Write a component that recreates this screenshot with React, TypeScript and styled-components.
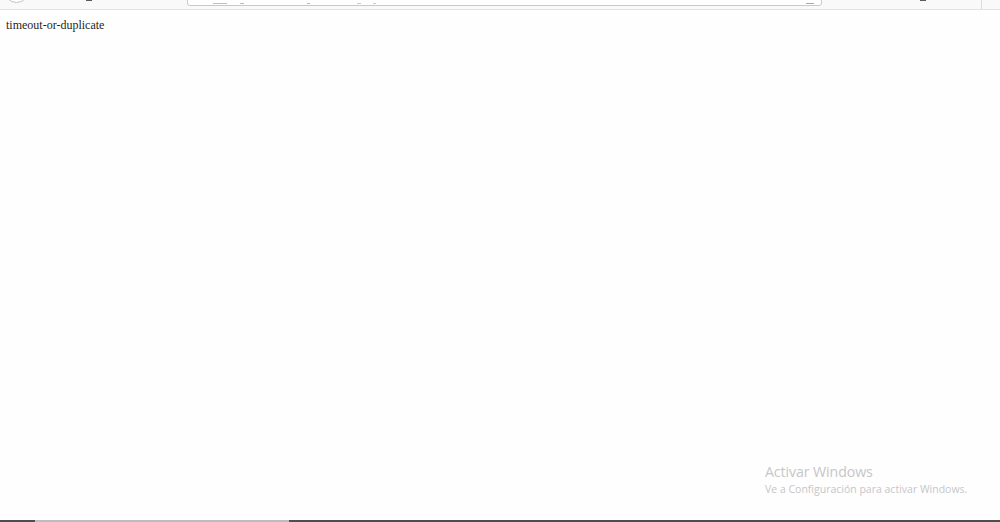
import React from 'react'
import styled, { createGlobalStyle } from 'styled-components'

const GlobalStyle = createGlobalStyle`
  html, body {
    margin: 0;
    padding: 0;
    background: #ffffff;
  }
`

const Screen = styled.div`
  position: relative;
  width: 1000px;
  height: 522px;
  display: flex;
  flex-direction: column;
  overflow: hidden;
  background: #fefefe;
`

const ChromeBar = styled.div`
  height: 9px;
  display: flex;
  align-items: flex-end;
  overflow: hidden;
  background: #f9f9fa;
  border-bottom: 1px solid #e3e3e5;
  flex-shrink: 0;
`

const RoundButton = styled.div`
  width: 23px;
  height: 23px;
  margin-left: 4px;
  margin-bottom: 6px;
  flex-shrink: 0;
  border: 1px solid #c4c4c6;
  border-radius: 50%;
  background: #ffffff;
`

const IconStub = styled.div<{ $gap: number }>`
  width: 6px;
  height: 2px;
  margin-left: ${p => p.$gap}px;
  margin-bottom: 8px;
  flex-shrink: 0;
  background: #5a5a5e;
`

const UrlBar = styled.div`
  width: 635px;
  height: 20px;
  margin-left: 95px;
  margin-bottom: 3px;
  flex-shrink: 0;
  box-sizing: border-box;
  display: flex;
  align-items: flex-end;
  border: 1px solid #c9c9cc;
  border-radius: 3px;
  background: #ffffff;
`

const UrlMark = styled.div<{ $gap: number; $color: string; $w: number }>`
  width: ${p => p.$w}px;
  height: 1px;
  margin-left: ${p => p.$gap}px;
  margin-bottom: 1px;
  flex-shrink: 0;
  background: ${p => p.$color};
`

const Separator = styled.div`
  width: 1px;
  height: 9px;
  margin-left: 55px;
  flex-shrink: 0;
  background: #dcdcde;
`

const Content = styled.div`
  flex: 1;
  padding: 8px 6px 0;
  font-family: 'Liberation Serif', 'Times New Roman', serif;
  font-size: 12px;
  line-height: 14px;
  color: #1e1e1e;
`

const Taskbar = styled.div`
  height: 2px;
  display: flex;
  flex-shrink: 0;
  background: #4e4e50;
`

const TaskbarActive = styled.div`
  width: 254px;
  margin-left: 35px;
  background: #bdbdbf;
`

const Watermark = styled.div`
  position: absolute;
  left: 765px;
  top: 462px;
  font-family: 'Open Sans', 'Noto Sans', sans-serif;
  color: #c6c6c8;
`

const WatermarkTitle = styled.div`
  font-size: 14.2px;
  line-height: 19px;
  letter-spacing: -0.1px;
`

const WatermarkText = styled.div`
  font-size: 10.5px;
  line-height: 14px;
  margin-top: 1px;
`

const App = () => {
  return (
    <Screen>
      <GlobalStyle />
      <ChromeBar>
        <RoundButton />
        <IconStub $gap={57} />
        <UrlBar>
          <UrlMark $gap={25} $color="#9fd59a" $w={14} />
          <UrlMark $gap={13} $color="#b8b8ba" $w={4} />
          <UrlMark $gap={63} $color="#b8b8ba" $w={3} />
          <UrlMark $gap={47} $color="#c8c8ca" $w={4} />
          <UrlMark $gap={12} $color="#c8c8ca" $w={3} />
          <UrlMark $gap={430} $color="#a8a8aa" $w={8} />
        </UrlBar>
        <IconStub $gap={98} />
        <Separator />
      </ChromeBar>
      <Content>timeout-or-duplicate</Content>
      <Taskbar>
        <TaskbarActive />
      </Taskbar>
      <Watermark>
        <WatermarkTitle>Activar Windows</WatermarkTitle>
        <WatermarkText>Ve a Configuración para activar Windows.</WatermarkText>
      </Watermark>
    </Screen>
  )
}

export default App
